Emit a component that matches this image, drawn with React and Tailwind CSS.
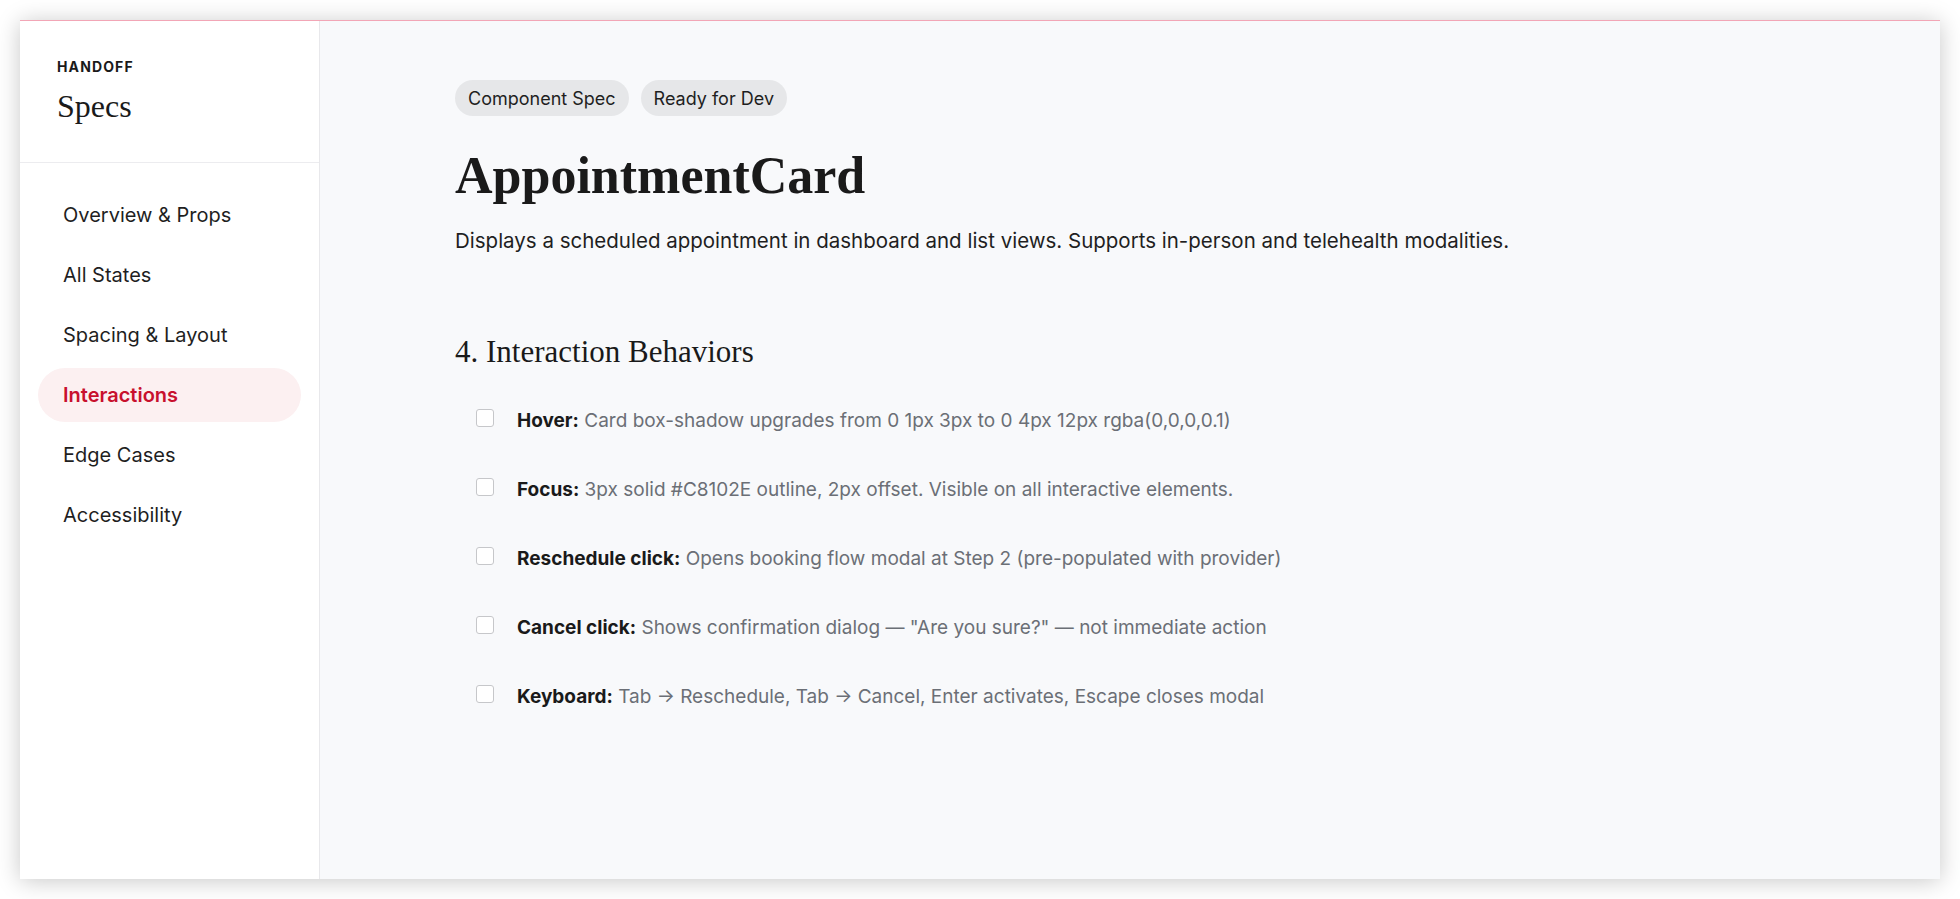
const navItems = [
  'Overview & Props',
  'All States',
  'Spacing & Layout',
  'Interactions',
  'Edge Cases',
  'Accessibility',
]

const behaviors = [
  { label: 'Hover:', text: 'Card box-shadow upgrades from 0 1px 3px to 0 4px 12px rgba(0,0,0,0.1)' },
  { label: 'Focus:', text: '3px solid #C8102E outline, 2px offset. Visible on all interactive elements.' },
  { label: 'Reschedule click:', text: 'Opens booking flow modal at Step 2 (pre-populated with provider)' },
  { label: 'Cancel click:', text: 'Shows confirmation dialog — "Are you sure?" — not immediate action' },
  { label: 'Keyboard:', text: 'Tab → Reschedule, Tab → Cancel, Enter activates, Escape closes modal' },
]

const sans = "font-['Inter','Liberation_Sans',sans-serif]"
const serif = "font-['Liberation_Serif',serif]"

function Sidebar() {
  return (
    <aside className="w-[300px] shrink-0 bg-white border-r border-[#e8e8eb] flex flex-col">
      <div className="h-[142px] border-b border-[#ececef] px-[37px] pt-[39px]">
        <div className="text-[14px] font-bold tracking-[0.08em] text-[#1a1a1a] leading-none">HANDOFF</div>
        <div className={`${serif} text-[32px] text-[#1a1a1a] leading-none mt-[16px]`}>Specs</div>
      </div>
      <nav className="px-[18px] pt-[25px] flex flex-col gap-[6px]">
        {navItems.map((item) => {
          const active = item === 'Interactions'
          return (
            <div
              key={item}
              className={`h-[54px] flex items-center px-[25px] rounded-full text-[20px] ${
                active ? 'bg-[#fcf0f1] text-[#c8102e] font-semibold' : 'text-[#1f1f1f]'
              }`}
            >
              {item}
            </div>
          )
        })}
      </nav>
    </aside>
  )
}

function Checkbox() {
  return <span className="mt-[2px] w-[18px] h-[18px] shrink-0 rounded-[3px] border border-[#c6c7ca] bg-white" />
}

export default function App() {
  return (
    <div className={`${sans} h-screen bg-white p-5`}>
      <div className="h-full flex border-t border-[#f2a6b6] shadow-[0_2px_22px_rgba(0,0,0,0.22)]">
        <Sidebar />
        <main className="flex-1 bg-[#f8f9fb] pl-[135px] pt-[59px]">
          <div className="flex gap-3">
            <span className="h-9 px-[13px] rounded-full bg-[#e6e7e9] text-[18px] text-[#1f1f1f] flex items-center">Component Spec</span>
            <span className="h-9 px-[13px] rounded-full bg-[#e6e7e9] text-[18px] text-[#1f1f1f] flex items-center">Ready for Dev</span>
          </div>
          <h1 className={`${serif} font-bold text-[52px] leading-none text-[#1a1a1a] mt-[34px]`}>AppointmentCard</h1>
          <p className="text-[20.5px] leading-none text-[#1f1f1f] mt-[29px]">
            Displays a scheduled appointment in dashboard and list views. Supports in-person and telehealth modalities.
          </p>
          <h2 className={`${serif} text-[31px] leading-none text-[#1a1a1a] mt-[84px]`}>4. Interaction Behaviors</h2>
          <ul className="mt-[40px] pl-[21px] flex flex-col gap-[41px]">
            {behaviors.map((b) => (
              <li key={b.label} className="flex items-start gap-[23px] text-[19px] leading-[28px]">
                <Checkbox />
                <span className="text-[#6b6f76]">
                  <span className="font-bold text-[#1a1a1a]">{b.label}</span> {b.text}
                </span>
              </li>
            ))}
          </ul>
        </main>
      </div>
    </div>
  )
}
